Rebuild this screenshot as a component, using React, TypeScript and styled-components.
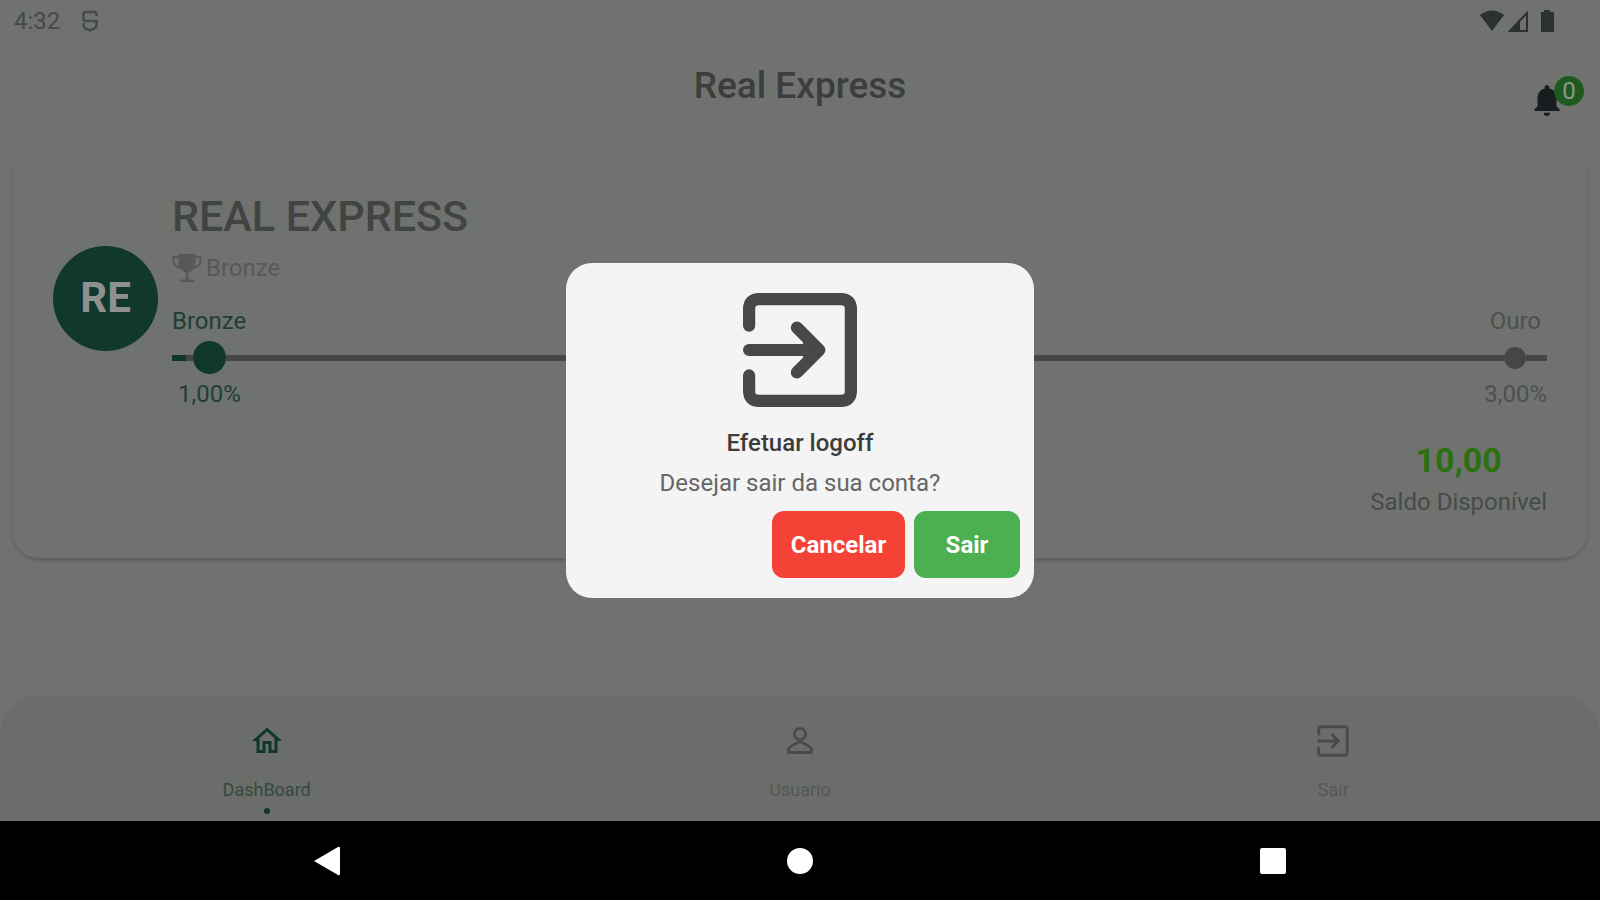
import React from 'react';
import styled, { createGlobalStyle } from 'styled-components';
import { MdNotifications, MdOutlineHome } from 'react-icons/md';

const Global = createGlobalStyle`
  * { box-sizing: border-box; }
  body {
    margin: 0;
    background: #6f726e;
    font-family: Roboto, "Liberation Sans", sans-serif;
    font-size: 24px;
    line-height: 28px;
  }
  button { border: 0; padding: 0; background: none; font: inherit; color: inherit; cursor: pointer; }
  h1, h2, p { margin: 0; }
`;

const Screen = styled.div`
  display: flex;
  flex-direction: column;
  min-height: 100vh;
  background: #6f726e;
  color: #474a49;
`;

const StatusBar = styled.div`
  display: flex;
  align-items: center;
  justify-content: space-between;
  height: 42px;
  padding: 0 44px 0 14px;
  color: #464a48;
`;

const StatusGroup = styled.div<{ $gap: number }>`
  display: flex;
  align-items: center;
  gap: ${(p) => p.$gap}px;
`;

const TopBar = styled.header`
  display: grid;
  grid-template-columns: 1fr auto 1fr;
  align-items: center;
  height: 88px;
  padding: 0 16px;
`;

const Title = styled.h1`
  grid-column: 2;
  font-size: 37px;
  line-height: 44px;
  font-weight: 500;
  color: #3b3e3d;
`;

const BellButton = styled.button`
  display: flex;
  align-items: flex-start;
  position: relative;
  justify-self: end;
  align-self: end;
  width: 56px;
  height: 54px;
  padding-top: 5px;
  color: #191d1f;
`;

const Badge = styled.span`
  position: absolute;
  top: 0;
  right: 0;
  width: 30px;
  height: 30px;
  border-radius: 50%;
  background: #1d5a20;
  color: #8f988b;
  line-height: 30px;
  text-align: center;
`;

const Content = styled.main`
  flex: 1;
  padding: 14px 13px 0;
`;

const Card = styled.section`
  display: flex;
  align-items: flex-start;
  gap: 14px;
  padding: 44px 40px 36px;
  border-radius: 26px;
  box-shadow: 0 3px 3px #5f6260;
  background: #6f726e;
`;

const Avatar = styled.div`
  flex: none;
  width: 105px;
  height: 105px;
  margin-top: 58px;
  border-radius: 50%;
  background: #11382d;
  color: #8e9190;
  font-size: 42px;
  line-height: 104px;
  font-weight: 700;
  text-align: center;
`;

const Details = styled.div`
  flex: 1;
`;

const Name = styled.h2`
  font-size: 43px;
  line-height: 56px;
  font-weight: 500;
  color: #414443;
`;

const Level = styled.div`
  display: flex;
  align-items: center;
  gap: 4px;
  height: 48px;
  color: #575958;
`;

const Steps = styled.div`
  display: flex;
  justify-content: space-between;
  margin-top: 15px;
`;

const Step = styled.span<{ $active?: boolean; $inset?: number }>`
  padding: 0 ${(p) => p.$inset ?? 0}px;
  color: ${(p) => (p.$active ? '#1f3f36' : '#4d504f')};
`;

const Track = styled.div`
  display: flex;
  align-items: center;
  height: 45px;
`;

const Bar = styled.div<{ $width?: number; $active?: boolean }>`
  flex: ${(p) => (p.$width ? 'none' : 1)};
  width: ${(p) => p.$width ?? 0}px;
  height: 6px;
  background: ${(p) => (p.$active ? '#0f372b' : '#454746')};
`;

const Dot = styled.div<{ $size: number; $active?: boolean }>`
  width: ${(p) => p.$size}px;
  height: ${(p) => p.$size}px;
  border-radius: 50%;
  background: ${(p) => (p.$active ? '#0f372b' : '#454746')};
`;

const Rates = styled(Steps)`
  margin-top: 0;
`;

const Balance = styled.div`
  width: fit-content;
  margin: 30px 0 0 auto;
  text-align: center;
`;

const Amount = styled.p`
  font-size: 34px;
  line-height: 44px;
  font-weight: 700;
  color: #2e6f11;
`;

const BalanceLabel = styled.p`
  line-height: 40px;
`;

const Tabs = styled.nav`
  display: grid;
  grid-template-columns: repeat(3, 1fr);
  height: 126px;
  border-radius: 40px 40px 0 0;
  background: #6a6d6a;
`;

const Tab = styled.button<{ $active?: boolean }>`
  display: flex;
  flex-direction: column;
  align-items: center;
  justify-content: flex-start;
  padding-top: 28px;
  color: ${(p) => (p.$active ? '#0f372b' : '#484b4a')};
`;

const TabIcon = styled.span`
  display: flex;
  align-items: center;
  height: 36px;
`;

const TabLabel = styled.span<{ $active?: boolean }>`
  margin-top: 19px;
  font-size: 18px;
  line-height: 24px;
  color: ${(p) => (p.$active ? '#34493f' : '#555857')};
`;

const TabDot = styled.span`
  width: 6px;
  height: 6px;
  margin-top: 6px;
  border-radius: 50%;
  background: #0f372b;
`;

const SystemBar = styled.div`
  display: grid;
  grid-template-columns: repeat(3, 1fr);
  height: 79px;
  padding: 0 90px;
  background: #000;
  color: #fff;
`;

const SystemButton = styled.button`
  display: flex;
  align-items: center;
  justify-content: center;
`;

const Overlay = styled.div`
  position: fixed;
  inset: 0;
  display: flex;
  align-items: center;
  justify-content: center;
  padding-bottom: 39px;
`;

const Dialog = styled.div`
  display: flex;
  flex-direction: column;
  align-items: center;
  width: 468px;
  padding: 30px 14px 20px;
  border-radius: 26px;
  background: #f4f4f4;
  color: #666;
`;

const DialogIcon = styled.div`
  height: 114px;
  color: #484848;
`;

const DialogTitle = styled.h2`
  margin-top: 16px;
  font-size: 24px;
  line-height: 40px;
  font-weight: 500;
  color: #3c3c3c;
`;

const Question = styled.p`
  line-height: 40px;
`;

const Actions = styled.div`
  display: flex;
  gap: 9px;
  align-self: flex-end;
  margin-top: 8px;
`;

const Action = styled.button<{ $color: string; $width: number }>`
  width: ${(p) => p.$width}px;
  height: 67px;
  border-radius: 12px;
  background: ${(p) => p.$color};
  color: #fff;
  font-weight: 700;
`;

const ExitIcon = ({ size, stroke = 6 }: { size: number; stroke?: number }) => (
  <svg width={size} height={size} viewBox="0 0 56 56" fill="none" stroke="currentColor" strokeWidth={stroke} strokeLinecap="round" strokeLinejoin="round">
    <path d="M3 16V8Q3 3 8 3H48Q53 3 53 8V48Q53 53 48 53H8Q3 53 3 48V40.500" />
    <path d="M3 28H35M26.500 17L37.500 28L26.500 39" />
    <path d="M31 22L37.500 28L31 34Z" fill="currentColor" strokeWidth="3" />
  </svg>
);

const PersonIcon = () => (
  <svg width="32" height="32" viewBox="0 0 32 32" fill="none" stroke="currentColor" strokeWidth="2.800" strokeLinejoin="round">
    <circle cx="16" cy="9" r="5.600" />
    <path d="M4.500 27.500V24.500C4.500 21.500 10 19.500 14 17.500Q16 16.500 18 17.500C22 19.500 27.500 21.500 27.500 24.500V27.500Z" />
  </svg>
);

const TrophyIcon = () => (
  <svg width="30" height="30" viewBox="0 0 30 30" fill="currentColor">
    <path d="M6.500 1H23.500V9C23.500 15 20 18.500 16.200 19.500V26.500H22.500V29H7.500V26.500H13.800V19.500C10 18.500 6.500 15 6.500 9Z" />
    <path d="M7 4H1.500V8C1.500 11 4 14 8 14.500M23 4H28.500V8C28.500 11 26 14 22 14.500" fill="none" stroke="currentColor" strokeWidth="2" />
  </svg>
);

export default function App() {
  return (
    <>
      <Global />
      <Screen>
        <StatusBar>
          <StatusGroup $gap={22}>
            <span>4:32</span>
            <svg width="16" height="22" viewBox="0 0 16 22" fill="none" stroke="currentColor" strokeWidth="2.500">
              <path d="M14.500 6V4.500Q14.500 2 12 2H4Q1.500 2 1.500 4.500V9Q1.500 11 4 11H14.500V15Q14.500 17.500 12.500 18.500L8 20.500L3.500 18.500Q1.500 17.500 1.500 15V13" />
            </svg>
          </StatusGroup>
          <StatusGroup $gap={4}>
            <svg width="24" height="22" viewBox="0 0 24 22" fill="#2c302e">
              <path d="M0 5Q12 -4 24 5L12 21Z" />
            </svg>
            <svg width="20" height="22" viewBox="0 0 20 22">
              <path d="M0 22L12 9V22Z" fill="#2c302e" />
              <path d="M2 21L19 3V21Z" fill="none" stroke="#2c302e" strokeWidth="2" />
            </svg>
            <svg width="24" height="22" viewBox="0 0 24 22" fill="#2c302e">
              <path d="M9 2H12V0H18V2H22V22H9Z" />
            </svg>
          </StatusGroup>
        </StatusBar>
        <TopBar>
          <Title>Real Express</Title>
          <BellButton aria-label="Notificações">
            <MdNotifications size={38} />
            <Badge>0</Badge>
          </BellButton>
        </TopBar>
        <Content>
          <Card>
            <Avatar>RE</Avatar>
            <Details>
              <Name>REAL EXPRESS</Name>
              <Level>
                <TrophyIcon />
                <span>Bronze</span>
              </Level>
              <Steps>
                <Step $active>Bronze</Step>
                <Step $inset={6}>Ouro</Step>
              </Steps>
              <Track>
                <Bar $width={14} $active />
                <Bar $width={7} />
                <Dot $size={33} $active />
                <Bar />
                <Dot $size={22} />
                <Bar $width={21} />
              </Track>
              <Rates>
                <Step $active $inset={6}>1,00%</Step>
                <Step>3,00%</Step>
              </Rates>
              <Balance>
                <Amount>10,00</Amount>
                <BalanceLabel>Saldo Disponível</BalanceLabel>
              </Balance>
            </Details>
          </Card>
        </Content>
        <Tabs>
          <Tab $active>
            <TabIcon><MdOutlineHome size={36} /></TabIcon>
            <TabLabel $active>DashBoard</TabLabel>
            <TabDot />
          </Tab>
          <Tab>
            <TabIcon><PersonIcon /></TabIcon>
            <TabLabel>Usuario</TabLabel>
          </Tab>
          <Tab>
            <TabIcon><ExitIcon size={32} stroke={5} /></TabIcon>
            <TabLabel>Sair</TabLabel>
          </Tab>
        </Tabs>
        <SystemBar>
          <SystemButton aria-label="Voltar">
            <svg width="28" height="30" viewBox="0 0 28 30" fill="currentColor"><path d="M1 15L25 1Q27 0 27 2V28Q27 30 25 29Z" /></svg>
          </SystemButton>
          <SystemButton aria-label="Início">
            <svg width="26" height="26" viewBox="0 0 26 26" fill="currentColor"><circle cx="13" cy="13" r="13" /></svg>
          </SystemButton>
          <SystemButton aria-label="Recentes">
            <svg width="26" height="26" viewBox="0 0 26 26" fill="currentColor"><rect width="26" height="26" rx="2" /></svg>
          </SystemButton>
        </SystemBar>
      </Screen>
      <Overlay>
        <Dialog role="dialog" aria-modal="true" aria-labelledby="logoff-title">
          <DialogIcon>
            <ExitIcon size={114} />
          </DialogIcon>
          <DialogTitle id="logoff-title">Efetuar logoff</DialogTitle>
          <Question>Desejar sair da sua conta?</Question>
          <Actions>
            <Action $color="#f44336" $width={133}>Cancelar</Action>
            <Action $color="#4caf50" $width={106}>Sair</Action>
          </Actions>
        </Dialog>
      </Overlay>
    </>
  );
}
